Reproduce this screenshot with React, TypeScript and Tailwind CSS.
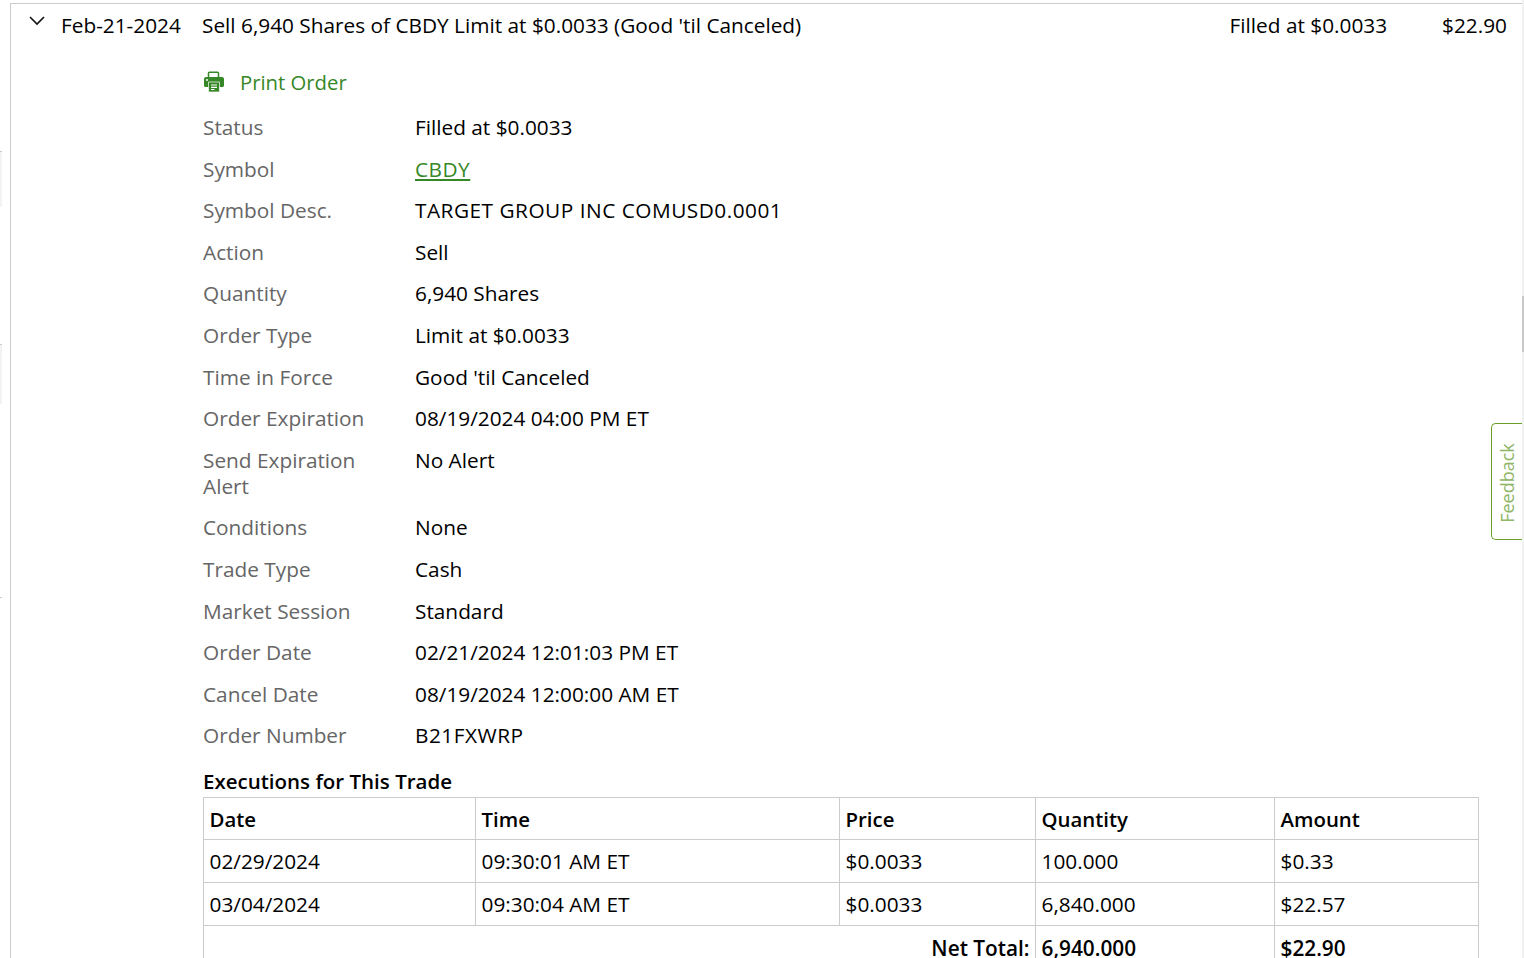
const details: [string, string][] = [
  ["Status", "Filled at $0.0033"],
  ["Symbol", "CBDY"],
  ["Symbol Desc.", "TARGET GROUP INC COMUSD0.0001"],
  ["Action", "Sell"],
  ["Quantity", "6,940 Shares"],
  ["Order Type", "Limit at $0.0033"],
  ["Time in Force", "Good 'til Canceled"],
  ["Order Expiration", "08/19/2024 04:00 PM ET"],
  ["Send Expiration Alert", "No Alert"],
  ["Conditions", "None"],
  ["Trade Type", "Cash"],
  ["Market Session", "Standard"],
  ["Order Date", "02/21/2024 12:01:03 PM ET"],
  ["Cancel Date", "08/19/2024 12:00:00 AM ET"],
  ["Order Number", "B21FXWRP"],
];

const executions = [
  ["02/29/2024", "09:30:01 AM ET", "$0.0033", "100.000", "$0.33"],
  ["03/04/2024", "09:30:04 AM ET", "$0.0033", "6,840.000", "$22.57"],
];

const cell = "border border-[#cccccc] px-[5.5px] h-[43px] text-left align-middle";

function PrinterIcon() {
  return (
    <svg width="22" height="22" viewBox="0 0 22 22" fill="none">
      <path d="M5.5 7V2.2c0-.6.4-1 1-1h8c.6 0 1 .4 1 1V7" stroke="#368727" strokeWidth="1.5" />
      <path d="M3 6h16c1.100 0 2 .9 2 2v6.500c0 .8-.6 1.500-1.500 1.500H2.500C1.600 16 1 15.300 1 14.500V8c0-1.100.9-2 2-2z" fill="#368727" />
      <circle cx="4" cy="9" r="1" fill="#fff" />
      <path d="M5.500 11h11v9c0 .6-.4 1-1 1h-9c-.6 0-1-.4-1-1z" fill="#368727" stroke="#fff" strokeWidth="0.7" />
      <path d="M8 14h6M8 16.300h6M8 18.500h3.500" stroke="#fff" strokeWidth="1.200" />
    </svg>
  );
}

export default function App() {
  return (
    <div className="relative h-[958px] w-[1524px] overflow-hidden bg-white font-['Open_Sans',sans-serif] text-[20.8px] leading-[26px] text-black">
      {/* slivers of the left nav */}
      <div className="absolute left-0 top-[151px] h-[56px] w-[2px] border-t border-[#cccccc] bg-[#f3f3f3]" />
      <div className="absolute left-0 top-[344px] h-[60px] w-[2px] border-t border-[#cccccc] bg-[#f3f3f3]" />
      <div className="absolute left-0 top-[597px] h-px w-[2px] bg-[#cccccc]" />

      {/* scrollbar */}
      <div className="absolute right-0 top-0 h-full w-[2px] bg-[#f1f1f1]">
        <div className="mt-[296px] h-[56px] bg-[#c8c8c8]" />
      </div>

      {/* feedback tab */}
      <div className="absolute left-[1491px] top-[423px] flex h-[117px] w-[31px] items-center justify-center rounded-l-[5px] border-y border-l border-[#6aa028] bg-white">
        <span className="translate-y-[1px] rotate-[-90deg] whitespace-nowrap text-[18px] text-[#8fb566]">
          Feedback
        </span>
      </div>

      <div className="ml-[10px] mr-[2px] mt-[3px] h-full border-l border-t border-[#cccccc]">
        {/* order row */}
        <div className="flex h-[43px] items-center pb-[2px]">
          <svg className="ml-[18px] mb-[8px] shrink-0" width="16" height="10" viewBox="0 0 16 10" fill="none">
            <path d="M1 1l7 7 7-7" stroke="#111" strokeWidth="1.600" />
          </svg>
          <span className="ml-[16px] w-[141px]">Feb-21-2024</span>
          <span className="flex-1">Sell 6,940 Shares of CBDY Limit at $0.0033 (Good 'til Canceled)</span>
          <span className="mr-[55px]">Filled at $0.0033</span>
          <span className="mr-[15px]">$22.90</span>
        </div>

        <div className="ml-[192px] mr-[43px]">
          {/* print link */}
          <div className="mt-[15px] flex h-[44.2px] items-center gap-[15px] pb-[4.2px] text-[20.3px] text-[#368727]">
            <PrinterIcon />
            <span>Print Order</span>
          </div>

          {/* order details */}
          <div>
            {details.map(([label, value]) => (
              <div key={label} className="grid grid-cols-[212px_1fr] py-[7.8px]">
                <div className="pr-[30px] text-[#666666]">{label}</div>
                <div className={label === "Symbol Desc." || label === "Order Number" ? "tracking-[0.5px]" : ""}>
                  {label === "Symbol" ? <span className="tracking-[0.5px] text-[#368727] underline">{value}</span> : value}
                </div>
              </div>
            ))}
          </div>

          {/* executions */}
          <h3 className="mt-[12px] text-[20.5px] font-semibold leading-[26px]">Executions for This Trade</h3>
          <table className="mt-[2.8px] w-[1275px] table-fixed border-collapse">
            <colgroup>
              <col className="w-[272px]" />
              <col className="w-[364px]" />
              <col className="w-[196px]" />
              <col className="w-[239px]" />
              <col className="w-[204px]" />
            </colgroup>
            <thead>
              <tr>
                {["Date", "Time", "Price", "Quantity", "Amount"].map((h) => (
                  <th key={h} className={`${cell} !h-[42px] pt-[2px] text-[20.4px] font-semibold`}>{h}</th>
                ))}
              </tr>
            </thead>
            <tbody>
              {executions.map((row) => (
                <tr key={row[0]}>
                  {row.map((v, i) => (
                    <td key={i} className={cell}>{v}</td>
                  ))}
                </tr>
              ))}
              <tr>
                <td colSpan={3} className={`${cell} pt-[2px] !text-right font-semibold`}>Net Total:</td>
                <td className={`${cell} pt-[2px] font-semibold`}>6,940.000</td>
                <td className={`${cell} pt-[2px] font-semibold`}>$22.90</td>
              </tr>
            </tbody>
          </table>
        </div>
      </div>
    </div>
  );
}
